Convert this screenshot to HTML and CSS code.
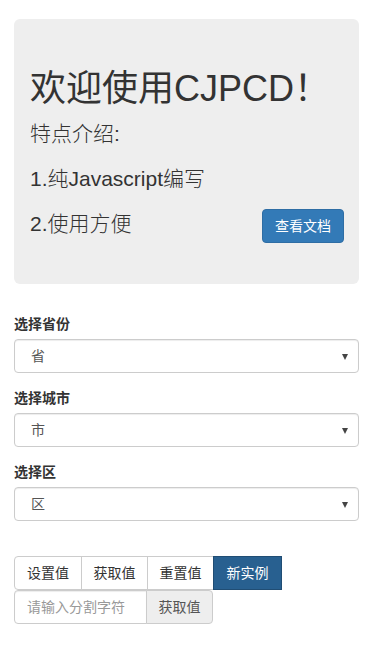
FILE: index.html
```html
<!DOCTYPE html>
<html lang="zh-CN">
<head>
<meta charset="utf-8">
<title>CJPCD</title>
<link rel="stylesheet" href="styles.css">
</head>
<body>
<div class="container">
  <div class="jumbotron">
    <h1>欢迎使用CJPCD！</h1>
    <p>特点介绍:</p>
    <p>1.纯Javascript编写</p>
    <p>2.使用方便<a class="btn btn-primary pull-right" href="#">查看文档</a></p>
  </div>

  <div class="form-group">
    <label class="label">选择省份</label>
    <div class="select-wrap"><select class="form-control"><option>省</option></select></div>
  </div>
  <div class="form-group">
    <label class="label">选择城市</label>
    <div class="select-wrap"><select class="form-control"><option>市</option></select></div>
  </div>
  <div class="form-group">
    <label class="label">选择区</label>
    <div class="select-wrap"><select class="form-control"><option>区</option></select></div>
  </div>

  <div class="actions">
    <div class="btn-group">
      <button class="btn btn-default">设置值</button>
      <button class="btn btn-default">获取值</button>
      <button class="btn btn-default">重置值</button>
      <button class="btn btn-dark">新实例</button>
    </div>
    <div class="input-group">
      <input class="split-input" type="text" placeholder="请输入分割字符">
      <span class="addon">获取值</span>
    </div>
  </div>
</div>
</body>
</html>
```

FILE: styles.css
```css
* { box-sizing: border-box; }
html, body { margin: 0; padding: 0; background: #fff; }
body {
  font-family: "Liberation Sans", Arial, "Noto Sans CJK SC", sans-serif;
  font-size: 14px;
  line-height: 1.42857143;
  color: #333;
}
.container {
  padding: 19px 15px 20px 14px;
}
.jumbotron {
  background: #eee;
  border-radius: 6px;
  padding: 30px 15px 30px 16px;
  margin-bottom: 30px;
}
.jumbotron h1 {
  font-size: 36px;
  font-weight: 400;
  line-height: 1.1;
  margin: 20px 0 10px;
  color: #333;
}
.jumbotron p {
  font-size: 21px;
  font-weight: 200;
  line-height: 30px;
  margin: 0 0 15px;
}
.pull-right { float: right; }
.btn {
  display: inline-block;
  padding: 6px 12px;
  font-family: inherit;
  font-size: 14px;
  font-weight: 400;
  line-height: 20px;
  border: 1px solid transparent;
  border-radius: 4px;
  text-decoration: none;
  cursor: pointer;
  background: #fff;
  color: #333;
  margin: 0;
}
.btn-primary {
  background: #337ab7;
  border-color: #2e6da4;
  color: #fff;
}
.form-group { margin-bottom: 15px; }
.label {
  display: block;
  font-weight: 700;
  margin-bottom: 5px;
  line-height: 20px;
}
.select-wrap { position: relative; }
.select-wrap::after {
  content: "";
  position: absolute;
  right: 11px;
  top: 15px;
  border-left: 3.5px solid transparent;
  border-right: 3.5px solid transparent;
  border-top: 6px solid #444;
  pointer-events: none;
}
.form-control {
  display: block;
  width: 100%;
  height: 34px;
  padding: 6px 12px 6px 16px;
  font-family: inherit;
  font-size: 14px;
  color: #555;
  background: #fff;
  border: 1px solid #ccc;
  border-radius: 4px;
  box-shadow: inset 0 1px 1px rgba(0,0,0,.075);
  -webkit-appearance: none;
  appearance: none;
}
.actions { padding-top: 20px; }
.btn-group { display: flex; }
.btn-group .btn {
  border-color: #ccc;
  border-radius: 0;
  width: 67px;
  height: 34px;
  padding: 6px 0;
  text-align: center;
  margin-left: -1px;
}
.btn-group .btn:first-child {
  margin-left: 0;
  border-radius: 4px 0 0 4px;
  width: 68px;
}
.btn-group .btn-dark {
  background: #286090;
  border-color: #204d74;
  color: #fff;
  border-radius: 0;
  width: 69px;
}
.input-group {
  display: flex;
  width: 199px;
}
.split-input {
  width: 133px;
  height: 34px;
  padding: 6px 12px;
  font-family: inherit;
  font-size: 14px;
  color: #555;
  border: 1px solid #ccc;
  border-radius: 4px 0 0 4px;
  box-shadow: inset 0 1px 1px rgba(0,0,0,.075);
  outline: none;
}
.split-input::placeholder { color: #999; }
.addon {
  width: 67px;
  height: 34px;
  margin-left: -1px;
  padding: 6px 0;
  text-align: center;
  line-height: 20px;
  background: #eee;
  border: 1px solid #ccc;
  border-radius: 0 4px 4px 0;
  color: #555;
}
```
